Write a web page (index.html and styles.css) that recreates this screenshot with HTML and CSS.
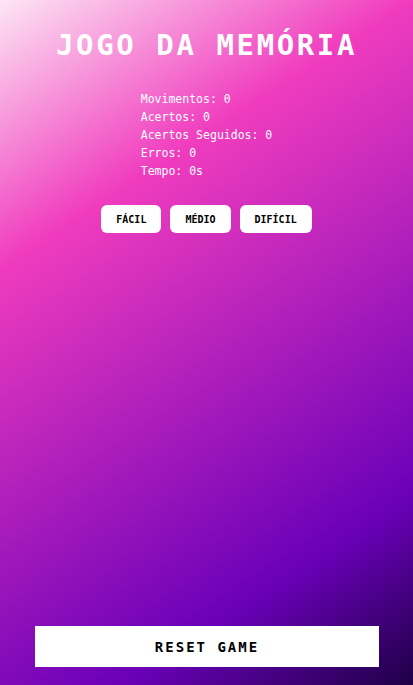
FILE: index.html
```html
<!DOCTYPE html>
<html lang="pt">
<head>
<meta charset="utf-8">
<title>Jogo da Memória</title>
<link rel="stylesheet" href="styles.css">
</head>
<body>
<main class="app">
  <h1 class="title">JOGO DA MEMÓRIA</h1>
  <div class="stats">
    <p>Movimentos: 0</p>
    <p>Acertos: 0</p>
    <p>Acertos Seguidos: 0</p>
    <p>Erros: 0</p>
    <p>Tempo: 0s</p>
  </div>
  <div class="levels">
    <button class="level">FÁCIL</button>
    <button class="level">MÉDIO</button>
    <button class="level">DIFÍCIL</button>
  </div>
  <div class="board"></div>
  <button class="reset">RESET GAME</button>
</main>
</body>
</html>
```
FILE: styles.css
```css
html, body {
  margin: 0;
  padding: 0;
  height: 100%;
}
body {
  font-family: "DejaVu Sans Mono", monospace;
  background: linear-gradient(147deg, #fde6f4 0%, #f03cbe 28%, #6a00b8 80%, #1e0046 100%);
  color: #fff;
}
.app {
  min-height: 100vh;
  box-sizing: border-box;
  display: flex;
  flex-direction: column;
  align-items: center;
  padding: 28px 0 18px;
}
.title {
  margin: 0;
  font-size: 29px;
  font-weight: bold;
  letter-spacing: 2.6px;
  line-height: 34px;
}
.stats {
  margin-top: 28px;
  font-size: 11.5px;
  line-height: 18px;
}
.stats p {
  margin: 0;
}
.levels {
  margin-top: 25px;
  display: flex;
  gap: 9px;
}
.level {
  font-family: "DejaVu Sans Mono", monospace;
  font-weight: bold;
  font-size: 10px;
  color: #000;
  background: #fff;
  border: none;
  border-radius: 6px;
  height: 28px;
  padding: 0 15px;
}
.board {
  flex: 1;
}
.reset {
  align-self: stretch;
  margin: 0 34px 0 35px;
  height: 41px;
  border: none;
  background: #fff;
  color: #000;
  font-family: "DejaVu Sans Mono", monospace;
  font-weight: bold;
  font-size: 14px;
  letter-spacing: 2px;
}
```
